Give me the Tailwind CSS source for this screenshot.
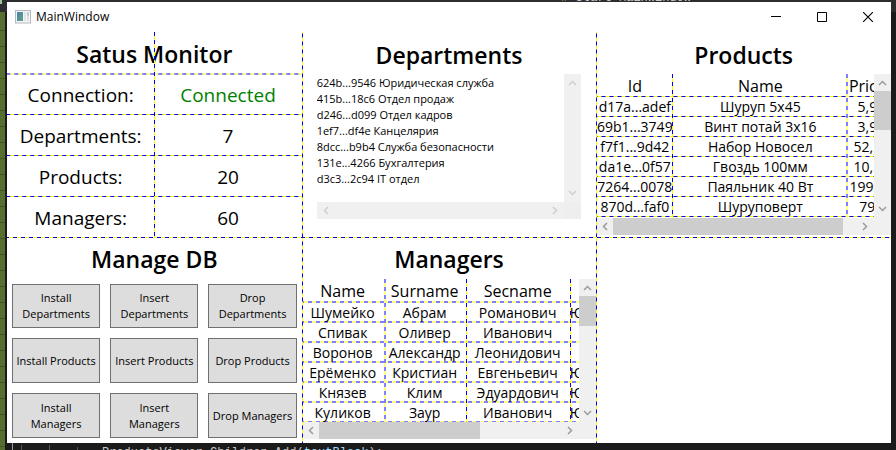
<!DOCTYPE html>
<html lang="en">
<head>
<meta charset="utf-8">
<title>MainWindow</title>
<script src="https://cdn.jsdelivr.net/npm/@tailwindcss/browser@4"></script>
</head>
<body class="relative h-screen overflow-hidden bg-[#1b1b1c] pt-[2px] pr-[5px] pb-[7px] pl-[7px] font-['Open_Sans','Noto_Sans',sans-serif] text-black">

<!-- Editor behind the window -->
<div class="absolute inset-x-0 top-0 h-3 overflow-hidden bg-[#2d2d30]">
  <span class="absolute right-[205px] bottom-2 font-['Liberation_Mono',monospace] text-xs leading-3 whitespace-pre text-[#c8c8c8]"><span class="text-[#d8a657]">&lt;#</span> Start MainWindow</span>
  <i class="absolute left-0 top-0 h-1 w-[2px] bg-[#9cc79c]"></i>
</div>
<div class="absolute top-3 bottom-0 left-0 w-[5px] bg-[repeating-linear-gradient(#566f30_0_15px,#42581f_15px_16px)] bg-[position:0_3px]"></div>
<div class="absolute bottom-0 left-[7px] right-0 h-[7px] overflow-hidden bg-[#1b1b1c]">
  <i class="absolute left-[5px] top-0 h-full w-px bg-[#9a9a9a]"></i>
  <i class="absolute left-[14px] top-[2px] h-full w-px bg-[#555]"></i>
  <i class="absolute left-[42px] top-[2px] h-full w-px bg-[#555]"></i>
  <i class="absolute left-[70px] top-[4px] h-full w-px bg-[#555]"></i>
  <span class="absolute left-[95px] top-[2px] font-['Liberation_Mono',monospace] text-xs leading-4 whitespace-pre text-[#c8c8c8]">ProductsViewer.Children.Add(<span class="text-[#9cdcfe]">textBlock</span>);</span>
</div>

<div class="relative flex h-full flex-col bg-white">
  <header class="flex h-[30px] shrink-0 items-center">
    <svg class="ml-2 h-[14px] w-[16px]" viewBox="0 0 16 14" aria-hidden="true">
      <defs><linearGradient id="pane" x1="0" y1="0" x2="1" y2="1"><stop offset="0" stop-color="#4a7fb0"/><stop offset="1" stop-color="#5fa883"/></linearGradient></defs>
      <rect x=".5" y=".5" width="15" height="12.5" fill="#f4f4f6" stroke="#b4b8c0"/>
      <rect x="2" y="2" width="6" height="9" fill="url(#pane)"/>
      <rect x="9" y="2" width="2" height="9" fill="#e2e4ea"/>
      <rect x="12" y="2" width="2" height="4" fill="#b9d3c4"/>
      <rect x="12" y="6" width="2" height="5" fill="#dde0e6"/>
    </svg>
    <h1 class="ml-[5px] text-xs">MainWindow</h1>
    <div class="ml-auto flex h-full">
      <button aria-label="Minimize" class="grid w-[46px] place-items-center"><svg width="10" height="10"><path d="M0 4.5h10" stroke="#000"/></svg></button>
      <button aria-label="Maximize" class="grid w-[46px] place-items-center pb-px"><svg width="10" height="10"><path d="M.5.5h9v9h-9z" fill="none" stroke="#000"/></svg></button>
      <button aria-label="Close" class="grid w-[46px] place-items-center pb-px"><svg width="10" height="10"><path d="M0 0l10 10M10 0L0 10" stroke="#000" stroke-width="1.1"/></svg></button>
    </div>
  </header>

  <main class="relative grid min-h-0 flex-1 grid-cols-3 grid-rows-2">

    <section class="relative grid min-h-0 grid-rows-5">
      <h2 class="flex items-center justify-center pt-1 text-[23px] font-semibold">Satus Monitor</h2>
      <div class="grid grid-cols-2 place-items-center bg-[linear-gradient(90deg,#8080ff_50%,#ffff80_50%)] bg-[length:8px_2px] bg-repeat-x bg-top pt-[3px] text-[19px]"><span>Connection:</span><span class="text-[#008000]">Connected</span></div>
      <div class="grid grid-cols-2 place-items-center bg-[linear-gradient(90deg,#00f_50%,#ff0_50%)] bg-[length:8px_1px] bg-repeat-x bg-top pt-[3px] text-[19px]"><span>Departments:</span><span>7</span></div>
      <div class="grid grid-cols-2 place-items-center bg-[linear-gradient(90deg,#00f_50%,#ff0_50%)] bg-[length:8px_1px] bg-repeat-x bg-top pt-[3px] text-[19px]"><span>Products:</span><span>20</span></div>
      <div class="grid grid-cols-2 place-items-center bg-[linear-gradient(90deg,#00f_50%,#ff0_50%)] bg-[length:8px_1px] bg-repeat-x bg-top pt-[3px] text-[19px]"><span>Managers:</span><span>60</span></div>
      <i class="absolute inset-y-0 left-1/2 w-px bg-[linear-gradient(#00f_50%,#ff0_50%)] bg-[length:1px_8px]"></i>
    </section>

    <section class="flex min-h-0 flex-col px-[15px] pb-[19px]">
      <h2 class="flex h-[42px] shrink-0 items-center justify-center pt-1 text-[23px] font-semibold">Departments</h2>
      <div class="grid min-h-0 flex-1 grid-cols-[1fr_17px] grid-rows-[1fr_17px]">
        <ul class="overflow-hidden text-[11px] leading-4 whitespace-nowrap pt-px">
          <li>624b...9546 Юридическая служба</li>
          <li>415b...18c6 Отдел продаж</li>
          <li>d246...d099 Отдел кадров</li>
          <li>1ef7...df4e Канцелярия</li>
          <li>8dcc...b9b4 Служба безопасности</li>
          <li>131e...4266 Бухгалтерия</li>
          <li>d3c3...2c94 IT отдел</li>
        </ul>
        <div class="flex flex-col items-center justify-between bg-[#f0f0f0] py-[6px]">
          <svg width="9" height="6"><path d="M1 5l3.500-3.500L8 5" fill="none" stroke="#cfcfcf" stroke-width="1.500"/></svg>
          <svg width="9" height="6"><path d="M1 1l3.500 3.500L8 1" fill="none" stroke="#cfcfcf" stroke-width="1.500"/></svg>
        </div>
        <div class="flex items-center justify-between bg-[#f0f0f0] px-[6px]">
          <svg width="6" height="9"><path d="M5 1L1.500 4.500 5 8" fill="none" stroke="#cfcfcf" stroke-width="1.500"/></svg>
          <svg width="6" height="9"><path d="M1 1l3.500 3.500L1 8" fill="none" stroke="#cfcfcf" stroke-width="1.500"/></svg>
        </div>
        <div class="bg-[#eee]"></div>
      </div>
    </section>

    <section class="flex min-h-0 flex-col pb-[3px]">
      <h2 class="flex h-[42px] shrink-0 items-center justify-center pt-1 text-[23px] font-semibold">Products</h2>
      <div class="grid min-h-0 flex-1 grid-cols-[1fr_17px] grid-rows-[1fr_17px]">
        <div class="relative overflow-hidden">
          <table class="w-[291px] table-fixed border-collapse text-center text-sm leading-5 whitespace-nowrap [&_tr]:bg-[linear-gradient(90deg,#00f_50%,#ff0_50%)] [&_tr]:bg-[length:8px_1px] [&_tr]:bg-repeat-x [&_tr]:bg-bottom [&_td]:h-5 [&_td]:p-0">
            <colgroup><col class="w-[77px]"><col class="w-[174px]"><col class="w-[40px]"></colgroup>
            <thead><tr class="h-[23px] text-base leading-5"><th class="p-0 font-normal">Id</th><th class="p-0 font-normal">Name</th><th class="p-0 font-normal">Price</th></tr></thead>
            <tbody>
              <tr><td>d17a...adef</td><td>Шуруп 5х45</td><td>5,9</td></tr>
              <tr><td>69b1...3749</td><td>Винт потай 3х16</td><td>3,9</td></tr>
              <tr><td>f7f1...9d42</td><td>Набор Новосел</td><td>52,5</td></tr>
              <tr><td>da1e...0f57</td><td>Гвоздь 100мм</td><td>10,5</td></tr>
              <tr><td>7264...0078</td><td>Паяльник 40 Вт</td><td>199,9</td></tr>
              <tr><td>870d...faf0</td><td>Шуруповерт</td><td>79</td></tr>
            </tbody>
          </table>
          <i class="absolute inset-y-0 left-[76px] w-px bg-[linear-gradient(#00f_50%,#ff0_50%)] bg-[length:1px_8px]"></i>
          <i class="absolute inset-y-0 left-[250px] w-[2px] bg-[linear-gradient(#8080ff_50%,#ffff80_50%)] bg-[length:2px_8px]"></i>
        </div>
        <div class="flex flex-col items-center bg-[#f0f0f0] py-[6px]">
          <svg class="shrink-0" width="9" height="6"><path d="M1 5l3.500-3.500L8 5" fill="none" stroke="#9c9c9c" stroke-width="1.500"/></svg>
          <i class="mt-[5px] h-[39px] w-full bg-[#cdcdcd]"></i>
          <svg class="mt-auto shrink-0" width="9" height="6"><path d="M1 1l3.500 3.500L8 1" fill="none" stroke="#9c9c9c" stroke-width="1.500"/></svg>
        </div>
        <div class="flex items-center bg-[#f0f0f0] px-[6px]">
          <svg class="shrink-0" width="6" height="9"><path d="M5 1L1.500 4.500 5 8" fill="none" stroke="#9c9c9c" stroke-width="1.500"/></svg>
          <i class="ml-[5px] h-full w-[230px] bg-[#cdcdcd]"></i>
          <svg class="ml-auto shrink-0" width="6" height="9"><path d="M1 1l3.500 3.500L1 8" fill="none" stroke="#9c9c9c" stroke-width="1.500"/></svg>
        </div>
        <div class="bg-[#f0f0f0]"></div>
      </div>
    </section>

    <section class="flex min-h-0 flex-col">
      <h2 class="flex h-[41px] shrink-0 items-center justify-center pt-[3px] text-[23px] font-semibold">Manage DB</h2>
      <div class="grid min-h-0 flex-1 grid-cols-3 grid-rows-3 gap-[10px] p-[5px] text-[11px] leading-4 [&_button]:border [&_button]:border-[#707070] [&_button]:bg-[#ddd]">
        <button>Install<br>Departments</button>
        <button>Insert<br>Departments</button>
        <button>Drop<br>Departments</button>
        <button>Install Products</button>
        <button>Insert Products</button>
        <button>Drop Products</button>
        <button>Install<br>Managers</button>
        <button>Insert<br>Managers</button>
        <button class="whitespace-nowrap">Drop Managers</button>
      </div>
    </section>

    <section class="flex min-h-0 flex-col pb-[4px]">
      <h2 class="flex h-[41px] shrink-0 items-center justify-center pt-[3px] text-[23px] font-semibold">Managers</h2>
      <div class="grid min-h-0 flex-1 grid-cols-[1fr_17px] grid-rows-[1fr_17px]">
        <div class="relative overflow-hidden">
          <table class="w-[468px] table-fixed border-collapse text-center text-sm leading-5 whitespace-nowrap [&_tr]:bg-[linear-gradient(90deg,#8080ff_50%,#ffff80_50%)] [&_tr]:bg-[length:8px_2px] [&_tr]:bg-repeat-x [&_tr]:bg-bottom [&_td]:h-5 [&_td]:p-0">
            <colgroup><col class="w-[82px]"><col class="w-[82px]"><col class="w-[104px]"><col class="w-[200px]"></colgroup>
            <thead><tr class="h-6 text-base leading-5"><th class="p-0 font-normal">Name</th><th class="p-0 font-normal">Surname</th><th class="p-0 font-normal">Secname</th><th class="p-0"></th></tr></thead>
            <tbody>
              <tr><td>Шумейко</td><td>Абрам</td><td>Романович</td><td class="text-left">Юридическая служба</td></tr>
              <tr><td>Спивак</td><td>Оливер</td><td>Иванович</td><td></td></tr>
              <tr><td>Воронов</td><td>Александр</td><td>Леонидович</td><td></td></tr>
              <tr><td>Ерёменко</td><td>Кристиан</td><td>Евгеньевич</td><td class="text-left">Юридическая служба</td></tr>
              <tr><td>Князев</td><td>Клим</td><td>Эдуардович</td><td class="text-left">Юридическая служба</td></tr>
              <tr><td>Куликов</td><td>Заур</td><td>Иванович</td><td class="text-left">Юридическая служба</td></tr>
            </tbody>
          </table>
          <i class="absolute inset-y-0 left-[82px] w-[2px] bg-[linear-gradient(#8080ff_50%,#ffff80_50%)] bg-[length:2px_8px]"></i>
          <i class="absolute inset-y-0 left-[164px] w-px bg-[linear-gradient(#00f_50%,#ff0_50%)] bg-[length:1px_8px]"></i>
          <i class="absolute inset-y-0 left-[268px] w-px bg-[linear-gradient(#00f_50%,#ff0_50%)] bg-[length:1px_8px]"></i>
        </div>
        <div class="flex flex-col items-center bg-[#f0f0f0] py-[6px]">
          <svg class="shrink-0" width="9" height="6"><path d="M1 5l3.500-3.500L8 5" fill="none" stroke="#9c9c9c" stroke-width="1.500"/></svg>
          <i class="mt-[5px] h-[30px] w-full bg-[#cdcdcd]"></i>
          <svg class="mt-auto shrink-0" width="9" height="6"><path d="M1 1l3.500 3.500L8 1" fill="none" stroke="#9c9c9c" stroke-width="1.500"/></svg>
        </div>
        <div class="flex items-center bg-[#f0f0f0] px-[6px]">
          <svg class="shrink-0" width="6" height="9"><path d="M5 1L1.500 4.500 5 8" fill="none" stroke="#9c9c9c" stroke-width="1.500"/></svg>
          <i class="ml-[5px] h-full w-[161px] bg-[#cdcdcd]"></i>
          <svg class="ml-auto shrink-0" width="6" height="9"><path d="M1 1l3.500 3.500L1 8" fill="none" stroke="#9c9c9c" stroke-width="1.500"/></svg>
        </div>
        <div class="bg-[#f0f0f0]"></div>
      </div>
    </section>

    <!-- Grid guide lines drawn over the content -->
    <div class="pointer-events-none absolute inset-0 grid grid-cols-3">
      <i></i>
      <i class="bg-[linear-gradient(#00f_50%,#ff0_50%)] bg-[length:1px_8px] bg-repeat-y bg-left"></i>
      <i class="bg-[linear-gradient(#00f_50%,#ff0_50%)] bg-[length:1px_8px] bg-repeat-y bg-left"></i>
    </div>
    <div class="pointer-events-none absolute inset-x-0 top-0 h-1/2 bg-[linear-gradient(90deg,#00f_50%,#ff0_50%)] bg-[length:8px_1px] bg-repeat-x bg-bottom"></div>
  </main>
</div>
</body>
</html>
